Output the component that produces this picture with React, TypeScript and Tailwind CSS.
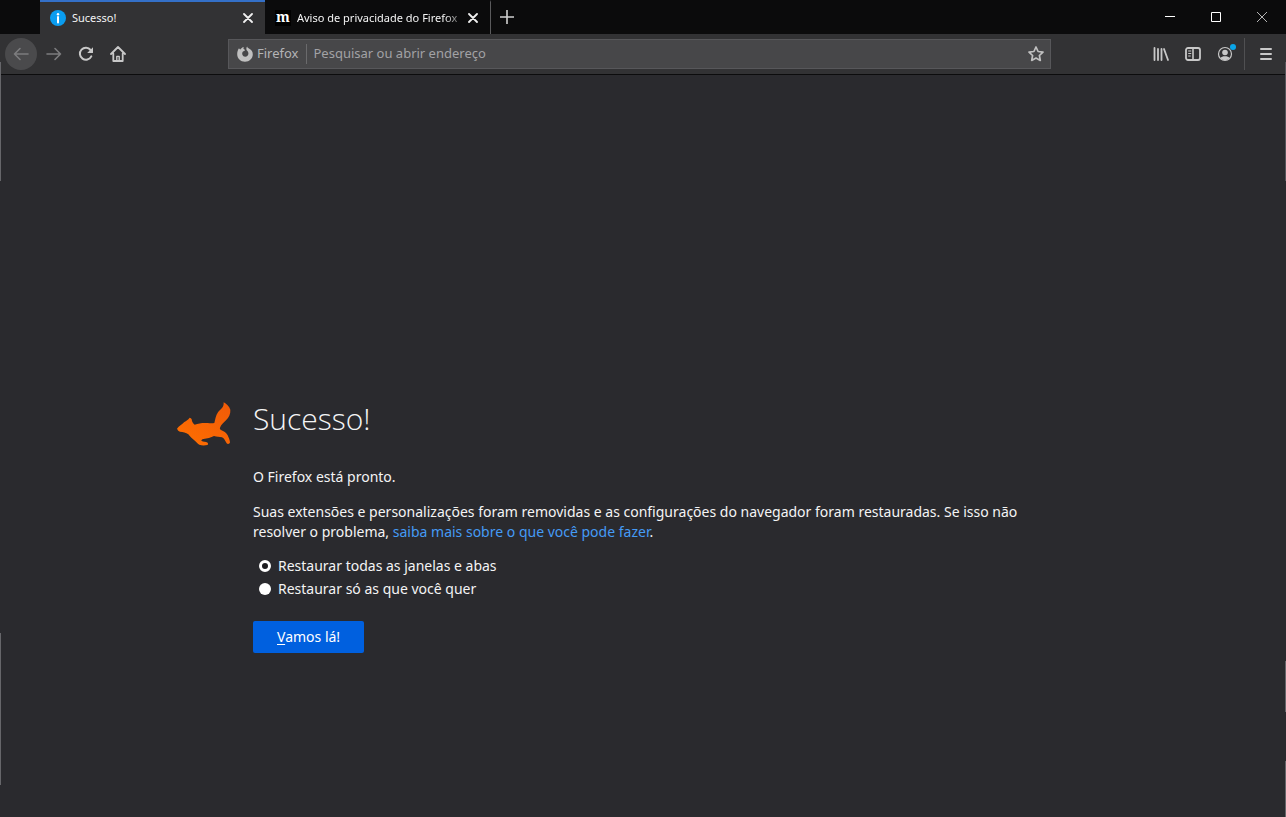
import { useState } from 'react';
import type { ReactNode } from 'react';

const toolButton = 'w-8 h-8 flex items-center justify-center text-[#c8c8c8] hover:bg-white/10';

function CloseIcon() {
  return (
    <svg width="10" height="10" viewBox="0 0 10 10" stroke="#f0f0f0" strokeWidth="1.8" strokeLinecap="round">
      <path d="M1 1l8 8M9 1L1 9" />
    </svg>
  );
}

function ToolButton({ label, children, className = '' }: { label: string; children: ReactNode; className?: string }) {
  return (
    <button aria-label={label} className={`${toolButton} ${className}`}>
      {children}
    </button>
  );
}

function TabBar() {
  return (
    <div className="flex h-[34px] bg-[#0b0b0c]">
      <div className="ml-10 w-[225px] flex items-center bg-[#323234] border-t-2 border-[#3470c8] pl-[10px] pr-3">
        <svg width="16" height="16" viewBox="0 0 16 16">
          <circle cx="8" cy="8" r="8" fill="#0a9df0" />
          <circle cx="8" cy="4.2" r="1.2" fill="#fff" />
          <path d="M8 7v5.4" stroke="#fff" strokeWidth="2" strokeLinecap="round" />
        </svg>
        <span className="ml-[6px] flex-1 text-[11px] text-[#f4f4f4]">Sucesso!</span>
        <button aria-label="Fechar aba">
          <CloseIcon />
        </button>
      </div>
      <div className="w-[226px] flex items-center border-t-2 border-t-transparent border-r border-r-[#5a5a5c] pl-[10px] pr-3">
        <span className="w-4 h-4 flex items-center justify-center bg-black text-white font-bold text-sm leading-none pb-[2px] font-['Noto_Serif','DejaVu_Serif',serif]">m</span>
        <span className="ml-[6px] flex-1 whitespace-nowrap text-[11px] text-[#f4f4f4] [mask-image:linear-gradient(to_left,transparent,black_24px)]">
          Aviso de privacidade do Firefox
        </span>
        <button aria-label="Fechar aba">
          <CloseIcon />
        </button>
      </div>
      <button aria-label="Nova aba" className="w-8 flex items-center justify-center">
        <svg width="14" height="14" viewBox="0 0 14 14" stroke="#d0d0d0" strokeWidth="1.6">
          <path d="M7 0v14M0 7h14" />
        </svg>
      </button>
      <div className="ml-auto mr-px flex">
        <button aria-label="Minimizar" className="w-[46px] flex items-center justify-center">
          <svg width="10" height="10" viewBox="0 0 10 10" stroke="#fff">
            <path d="M0 4.5h10" />
          </svg>
        </button>
        <button aria-label="Maximizar" className="w-[46px] flex items-center justify-center">
          <svg width="10" height="10" viewBox="0 0 10 10" stroke="#fff" fill="none">
            <path d="M.5.5h9v9h-9z" />
          </svg>
        </button>
        <button aria-label="Fechar" className="w-[46px] flex items-center justify-center">
          <svg width="10" height="10" viewBox="0 0 10 10" stroke="#b4b4b4">
            <path d="M0 0l10 10M10 0L0 10" />
          </svg>
        </button>
      </div>
    </div>
  );
}

function NavBar() {
  return (
    <div className="flex items-center h-[41px] bg-[#323234] border-b border-[#0c0c0d] pl-[5px] pr-1">
      <ToolButton label="Voltar" className="mr-px rounded-full bg-[#4a4a4c]">
        <svg width="16" height="16" viewBox="0 0 16 16" stroke="#7c7c7e" strokeWidth="1.6" fill="none" strokeLinecap="round" strokeLinejoin="round">
          <path d="M15 8H1.5M7 2.5L1.5 8 7 13.5" />
        </svg>
      </ToolButton>
      <ToolButton label="Avançar">
        <svg width="16" height="16" viewBox="0 0 16 16" stroke="#7c7c7e" strokeWidth="1.6" fill="none" strokeLinecap="round" strokeLinejoin="round">
          <path d="M1 8h13.5M9 2.5L14.5 8 9 13.5" />
        </svg>
      </ToolButton>
      <ToolButton label="Recarregar">
        <svg width="16" height="16" viewBox="0 0 16 16" fill="none" stroke="currentColor" strokeWidth="2" strokeLinecap="round">
          <path d="M13.3 10.4A6 6 0 1 1 12.6 4" />
          <path d="M15 1.2V6.5a.5.5 0 0 1-.5.5H9.2z" fill="currentColor" stroke="none" />
        </svg>
      </ToolButton>
      <ToolButton label="Página inicial">
        <svg width="16" height="16" viewBox="0 0 16 16" fill="none" stroke="currentColor" strokeWidth="1.8" strokeLinecap="round" strokeLinejoin="round">
          <path d="M1 8l7-7 7 7M3.3 7.5V15h9.4V7.5" />
          <path d="M6.8 15v-4.6h2.4V15" strokeWidth="1.4" />
        </svg>
      </ToolButton>

      <div className="ml-[94px] flex-1 max-w-[823px] h-[30px] flex items-center bg-[#474749] border border-[#57575a] text-[13px]">
        <svg className="ml-2" width="16" height="16" viewBox="0 0 16 16" fill="#c0c0c0">
          <path d="M2 2.2c.3.5.7.9 1.3 1.2C4.1 2.2 5.3 1.2 6.9.9c-.6.8-.6 1.600-.1 2.200.3.4.8.6 1.300.8-.3.8-1.500 1-2.100 1.700-1.800 2-.4 5.200 2.200 5.200 1.900 0 3.200-1.500 3.200-3.200 0-1.400-.7-2.300-1.500-3-.7-1-.8-2.600.2-4 .2.900.9 1.500 1.800 2C14.3 3.500 15.8 5.700 15.8 8.300 15.8 12.5 12.4 15.800 8 15.800S.2 12.500.2 8.300c0-2.400.6-4.500 1.800-6.100z" />
        </svg>
        <span className="ml-1 pr-[7px] border-r border-[#6a6a6c] text-[#b4b4b6]">Firefox</span>
        <input
          type="text"
          aria-label="Pesquisar ou abrir endereço"
          placeholder="Pesquisar ou abrir endereço"
          className="ml-[7px] flex-1 min-w-0 bg-transparent text-white placeholder:text-[#a2a2a5] outline-none"
        />
        <button aria-label="Adicionar aos favoritos" className="mr-[6px] text-[#c0c0c0]">
          <svg width="16" height="16" viewBox="0 0 16 16" fill="none" stroke="currentColor" strokeWidth="1.7" strokeLinejoin="round">
            <path d="M8 1l2.1 4.5 4.9.6-3.6 3.4.9 4.9L8 12l-4.3 2.4.9-4.9L1 6.1l4.900-.6z" />
          </svg>
        </button>
      </div>

      <div className="ml-auto flex items-center">
        <ToolButton label="Biblioteca">
          <svg width="16" height="16" viewBox="0 0 16 16" stroke="currentColor" strokeWidth="1.8" strokeLinecap="round">
            <path d="M1.5 2v12M5 3v11M8.5 3v11M11 3l4 11" />
          </svg>
        </ToolButton>
        <ToolButton label="Painel lateral">
          <svg width="16" height="16" viewBox="0 0 16 16" fill="none" stroke="currentColor">
            <rect x="1" y="2" width="14" height="12" rx="2" strokeWidth="1.8" />
            <path d="M8 2v12" strokeWidth="1.6" />
            <path d="M3.2 5h3M3.2 7.5h3M3.2 10h2.5" strokeWidth="1.2" />
          </svg>
        </ToolButton>
        <ToolButton label="Conta" className="relative">
          <svg width="16" height="16" viewBox="0 0 16 16" fill="none" stroke="currentColor">
            <circle cx="8" cy="8" r="6.5" strokeWidth="1.2" />
            <circle cx="8" cy="6.5" r="2.8" fill="currentColor" stroke="none" />
            <path d="M3.5 12c1-2.5 8-2.5 9 0-2 2.8-7 2.8-9 0z" fill="currentColor" stroke="none" />
          </svg>
          <span className="absolute top-[6px] right-[5px] w-[6px] h-[6px] rounded-full bg-[#0aa5e8]" />
        </ToolButton>
        <div className="ml-[3px] mr-[5px] w-px h-8 bg-[#505052]" />
        <ToolButton label="Abrir menu">
          <svg width="12" height="12" viewBox="0 0 12 12" stroke="currentColor" strokeWidth="2" strokeLinecap="round">
            <path d="M1 1h10M1 6h10M1 11h10" />
          </svg>
        </ToolButton>
      </div>
    </div>
  );
}

function Fox() {
  return (
    <svg width="54" height="45" viewBox="21 18 162 135" aria-hidden="true">
      <defs>
        <linearGradient id="fur" x1="0" y1="1" x2="1" y2="0">
          <stop offset="0" stopColor="#ff7000" />
          <stop offset="1" stopColor="#f05a08" />
        </linearGradient>
      </defs>
      <path
        fill="url(#fur)"
        d="M21 98C27 90 36 85 43 78c6-4 11-6 16-13 3 1 6 3 6 5 1 7 3 12 9 16 13-5 26-6 39-5 9 1 14 1 20 0 3-10 4-22 11-32 8-11 18-13 17-30 8 4 17 13 20 22 1 13-4 23-13 32-7 7-15 13-18 22-1 3 0 5 3 7 8 3 16 8 20 16 3 7 6 12 7 21-1 6-8 6-10 3-4-6-5-13-14-18-7-2-16-1-24-4-9 5-21 8-32 9-4 1-6 3-6 5 6 4 13 2 19 6 2 3 1 6-1 7-8 2-17 2-24-1-6-3-10-9-16-14-6-5-11-9-17-17-7-6-16-7-25-8-4-1-7-4-8-7z"
      />
    </svg>
  );
}

const options = [
  { value: 'all', label: 'Restaurar todas as janelas e abas' },
  { value: 'some', label: 'Restaurar só as que você quer' },
];

function SuccessPage() {
  const [restore, setRestore] = useState('all');

  return (
    <main className="flex-1 px-20 pt-[324px] pb-10 text-[#f4f4f5]">
      <div className="relative max-w-[780px] mx-auto">
        <div className="absolute top-[3px] -left-[76px]">
          <Fox />
        </div>
        <h1 className="text-[30px] leading-10 font-light font-['Open_Sans','Noto_Sans',sans-serif]">Sucesso!</h1>
        <p className="mt-7 text-sm leading-5">O Firefox está pronto.</p>
        <p className="mt-[15px] text-sm leading-5">
          Suas extensões e personalizações foram removidas e as configurações do navegador foram restauradas. Se isso não
          resolver o problema,{' '}
          <a href="#ajuda" className="text-[#459bf5] hover:underline">saiba mais sobre o que você pode fazer</a>.
        </p>
        <div className="mt-3 flex flex-col">
          {options.map((o) => (
            <label key={o.value} className="flex items-center h-[23px] text-sm">
              <input
                type="radio"
                name="restore"
                value={o.value}
                checked={restore === o.value}
                onChange={() => setRestore(o.value)}
                className="appearance-none ml-[6px] mr-[7px] w-3 h-3 rounded-full bg-white checked:bg-[#1c1c20] checked:border-3 checked:border-white"
              />
              {o.label}
            </label>
          ))}
        </div>
        <button className="mt-[21px] h-8 px-6 rounded-xs bg-[#0060df] hover:bg-[#003eaa] text-sm text-white">
          <span className="underline underline-offset-2">V</span>amos lá!
        </button>
      </div>
    </main>
  );
}

export default function App() {
  return (
    <div className="relative min-h-screen flex flex-col bg-[#2a2a2e] font-['Noto_Sans','Open_Sans',sans-serif]">
      <TabBar />
      <NavBar />
      <SuccessPage />
      {/* Window edge highlights */}
      <span className="absolute left-0 top-[62px] w-px h-[119px] bg-[#66666a]" />
      <span className="absolute left-0 bottom-8 w-px h-[152px] bg-[#66666a]" />
      <span className="absolute right-0 top-[62px] w-px h-[119px] bg-[#55555a]" />
      <span className="absolute right-0 bottom-[105px] w-px h-[51px] bg-[#66666a]" />
      <span className="absolute right-0 bottom-0 w-px h-14 bg-[#66666a]" />
    </div>
  );
}
